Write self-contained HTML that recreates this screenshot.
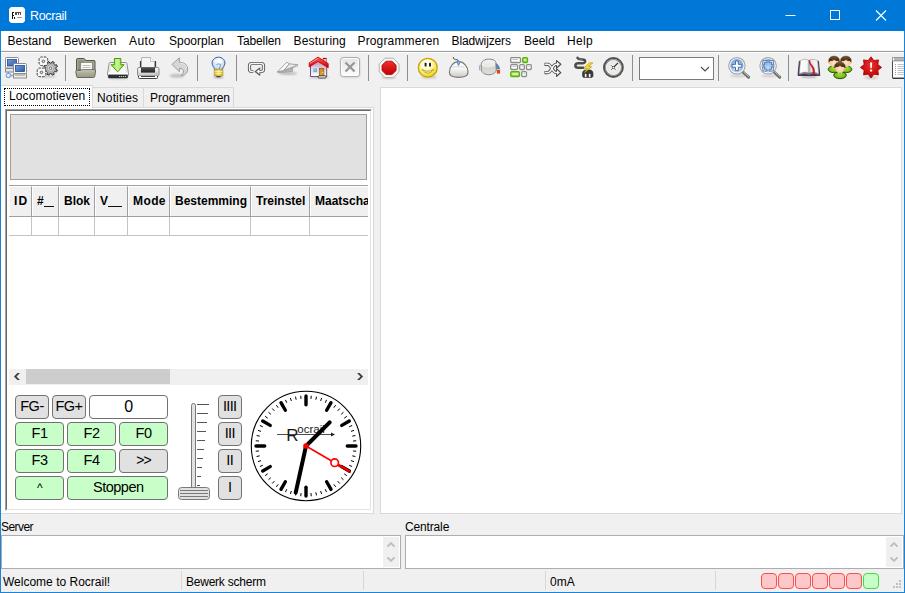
<!DOCTYPE html>
<html><head><meta charset="utf-8"><title>Rocrail</title>
<style>
*{box-sizing:border-box;margin:0;padding:0}
html,body{width:905px;height:593px;overflow:hidden;background:#f0f0f0}
body{font-family:"Liberation Sans",sans-serif;font-size:12px;color:#000;position:relative}
.a{position:absolute}
.t{position:absolute;white-space:nowrap;line-height:14px;height:14px}
#title{left:0;top:0;width:905px;height:31px;background:#0078d7}
#menubar{left:1px;top:31px;width:903px;height:20px;background:#fff}
#menubar .t{top:3px}
#tbline{left:1px;top:51px;width:903px;height:1px;background:#a0a0a0}
#toolbar{left:1px;top:52px;width:903px;height:34px;background:#f0f0f0}
.sep{position:absolute;top:57px;width:1px;height:24px;background:#a0a0a0}
.ic{position:absolute;top:56px;width:24px;height:24px}
.bl{left:0;top:31px;width:1px;height:562px;background:#1883d7}
.br{left:904px;top:31px;width:1px;height:562px;background:#1883d7}
.bb{left:0;top:592px;width:905px;height:1px;background:#1883d7}

.tab{position:absolute;top:87px;height:20px;background:#f0f0f0;border:1px solid #d9d9d9;border-bottom:none}
.btn{position:absolute;height:24px;border:1px solid #727272;border-radius:4px;background:#e1e1e1;text-align:center;font-size:14.5px;letter-spacing:-.5px;line-height:21px}
.g{background:#c8ffc8}
.hc{position:absolute;top:0;height:30px;border-right:1px solid #a0a0a0;border-left:1px solid #fff;border-top:1px solid #fff;font-weight:bold;font-size:12px;line-height:28px;padding-left:4px;white-space:nowrap;overflow:hidden}
.vl{position:absolute;top:217px;width:1px;height:18px;background:#c4c4c4}
.sbx{position:absolute;top:571px;width:1px;height:19px;background:#d7d7d7}
.led{position:absolute;top:573px;width:16px;height:16px;border:1px solid #ff4d4d;border-radius:4px;background:#ffc8c8}
</style></head><body>
<!-- TITLE BAR -->
<div id="title" class="a"></div>
<svg class="a" style="left:9px;top:7px" width="16" height="16" viewBox="0 0 16 16"><path d="M2 0h12l2 2v12l-2 2H2l-2 -2V2z" fill="#fff"/><path d="M3 5h2v1h-1v2h1v1h-1v3h-1zM5 10h1v2h-1z" fill="#111"/><path d="M6 5h6v3h-1v-2h-1v2h-1v-2h-1v2h-2z" fill="#333" opacity=".85"/><path d="M8 10h5v1h-5z" fill="#999"/></svg>
<div class="t" style="left:30px;top:9px;color:#fff;font-size:12.5px;letter-spacing:-0.35px">Rocrail</div>
<svg class="a" style="left:767px;top:0" width="138" height="31" viewBox="0 0 138 31">
<path d="M18.5 15.5h10" stroke="#fff" stroke-width="1" fill="none"/>
<rect x="63.500" y="10.500" width="9" height="9" stroke="#fff" stroke-width="1" fill="none"/>
<path d="M109 10.500l10 10M119 10.500l-10 10" stroke="#fff" stroke-width="1.100" fill="none"/>
</svg>
<!-- MENU -->
<div id="menubar" class="a">
<span class="t" style="left:6.500px">Bestand</span>
<span class="t" style="left:62.500px;letter-spacing:-.08px">Bewerken</span>
<span class="t" style="left:128px;letter-spacing:.45px">Auto</span>
<span class="t" style="left:168px">Spoorplan</span>
<span class="t" style="left:236px;letter-spacing:-.1px">Tabellen</span>
<span class="t" style="left:292.500px;letter-spacing:.2px">Besturing</span>
<span class="t" style="left:356.500px;letter-spacing:.15px">Programmeren</span>
<span class="t" style="left:450.500px;letter-spacing:-.12px">Bladwijzers</span>
<span class="t" style="left:523px">Beeld</span>
<span class="t" style="left:566px;letter-spacing:.35px">Help</span>
</div>
<div id="tbline" class="a"></div>
<div id="toolbar" class="a"></div>
<div class="a" style="left:1px;top:52px;width:903px;height:1px;background:#fff"></div>
<div class="a" style="left:1px;top:50px;width:903px;height:1px;background:#f5f5f5"></div>
<!-- TOOLBAR-ICONS -->
<svg class="a" style="left:0;top:52px" width="905" height="34" viewBox="0 52 905 34">
<defs>
<linearGradient id="scr" x1="0" y1="0" x2="1" y2="1"><stop offset="0" stop-color="#7a9fd6"/><stop offset=".5" stop-color="#4d7cc4"/><stop offset="1" stop-color="#2a56a6"/></linearGradient>
<linearGradient id="fold" x1="0" y1="0" x2="0" y2="1"><stop offset="0" stop-color="#bdbdaa"/><stop offset="1" stop-color="#9a9a86"/></linearGradient>
<linearGradient id="grn" x1="0" y1="0" x2="1" y2="0"><stop offset="0" stop-color="#8fe03a"/><stop offset=".5" stop-color="#c6f59a"/><stop offset="1" stop-color="#7ed321"/></linearGradient>
<linearGradient id="prn" x1="0" y1="0" x2="0" y2="1"><stop offset="0" stop-color="#fafafa"/><stop offset="1" stop-color="#c4c4c4"/></linearGradient>
<linearGradient id="slot" x1="0" y1="0" x2="0" y2="1"><stop offset="0" stop-color="#555"/><stop offset="1" stop-color="#222"/></linearGradient>
<linearGradient id="gold" x1="0" y1="0" x2="1" y2="0"><stop offset="0" stop-color="#c9a200"/><stop offset=".5" stop-color="#f3e38a"/><stop offset="1" stop-color="#c9a200"/></linearGradient>
<radialGradient id="bulb" cx=".5" cy=".35" r=".6"><stop offset="0" stop-color="#ffffff"/><stop offset="1" stop-color="#c3d6ef"/></radialGradient>
<radialGradient id="gear" cx=".5" cy=".5" r=".5"><stop offset="0" stop-color="#e6e6e6"/><stop offset=".6" stop-color="#b8b8b8"/><stop offset="1" stop-color="#8e8e8e"/></radialGradient>
<filter id="b1" x="-20%" y="-50%" width="140%" height="200%"><feGaussianBlur stdDeviation="0.9"/></filter>
</defs>
<!-- separators -->
<g fill="#8e8e8e">
<rect x="65" y="55" width="1" height="26"/><rect x="197" y="55" width="1" height="26"/><rect x="236" y="55" width="1" height="26"/><rect x="368" y="55" width="1" height="26"/><rect x="407" y="55" width="1" height="26"/><rect x="632" y="55" width="1" height="26"/><rect x="718" y="55" width="1" height="26"/><rect x="788" y="55" width="1" height="26"/>
</g>
<!-- combo -->
<rect x="639.500" y="57.500" width="74" height="22" fill="#fff" stroke="#7a7a7a"/>
<path d="M701 67L705 71L709 67" stroke="#505050" stroke-width="1.200" fill="none"/>

<!-- 1 network computers -->
<g>
<circle cx="8.400" cy="75.400" r="2.100" fill="#f4f8fd" stroke="#7fabe0" stroke-width="1.300"/>
<rect x="7.600" y="72" width="1.800" height="1.600" fill="#7fabe0"/><rect x="10.400" y="74.600" width="3.400" height="1.700" fill="#7fabe0"/>
<rect x="5.500" y="68.500" width="8" height="3.500" fill="#e4e4e4" stroke="#8a8a8a"/>
<rect x="5.500" y="57.500" width="13" height="10.500" rx="1" fill="#fff" stroke="#8a8a8a"/>
<rect x="7.500" y="59.500" width="9" height="6.500" fill="url(#scr)" stroke="#1f4a9a" stroke-width=".8"/>
<rect x="13.500" y="63.500" width="13" height="10" rx="1" fill="#fff" stroke="#8a8a8a"/>
<rect x="15.500" y="65.500" width="9" height="6" fill="url(#scr)" stroke="#1f4a9a" stroke-width=".8"/>
<rect x="13.500" y="74" width="13" height="4" fill="#f4f4f4" stroke="#8a8a8a"/>
<path d="M15 75.600H25" stroke="#b5b5b5" stroke-width="1"/>
</g>
<!-- 2 gears -->
<g>
<ellipse cx="48" cy="76.300" rx="8" ry="1.200" fill="#000" opacity=".2" filter="url(#b1)"/>
<g transform="translate(50.600 68.300)">
<path d="M0.78 -5.24L1.63 -6.81L3.66 -5.97L3.16 -4.26L4.26 -3.16L5.97 -3.66L6.81 -1.63L5.24 -0.78L5.24 0.78L6.81 1.63L5.97 3.66L4.26 3.16L3.16 4.26L3.66 5.97L1.63 6.81L0.78 5.24L-0.78 5.24L-1.63 6.81L-3.66 5.97L-3.16 4.26L-4.26 3.16L-5.97 3.66L-6.81 1.63L-5.24 0.78L-5.24 -0.78L-6.81 -1.63L-5.97 -3.66L-4.26 -3.16L-3.16 -4.26L-3.66 -5.97L-1.63 -6.81L-0.78 -5.24z" fill="url(#gear)" stroke="#3c3c3c" stroke-width="1" stroke-linejoin="round"/>
<circle r="3.300" fill="#dcdcdc" stroke="#9a9a9a" stroke-width=".8"/><circle r="1.300" fill="#fff" stroke="#444" stroke-width=".8"/>
</g>
<g transform="translate(43.400 61.300)">
<rect x="-4.300" y="-4.300" width="8.600" height="8.600" rx="2.300" fill="#f6f6f6" stroke="#363636" stroke-width="1" stroke-dasharray="2.500 1.150" stroke-dashoffset="1.200"/>
<circle r="1.250" fill="#e0e0e0" stroke="#444" stroke-width=".8"/>
</g>
<g transform="translate(41.500 72.400)">
<rect x="-4.300" y="-4.300" width="8.600" height="8.600" rx="2.300" fill="#f6f6f6" stroke="#363636" stroke-width="1" stroke-dasharray="2.500 1.150" stroke-dashoffset="1.200"/>
<circle r="1.250" fill="#e0e0e0" stroke="#444" stroke-width=".8"/>
</g>
</g>
<!-- 3 folder -->
<g>
<path d="M76.500 70V59.500q0 -1 1 -1h6q1 0 1.500 1l.5 1h8.500q1 0 1 1V70z" fill="#8f8f7c" stroke="#55554a" stroke-width="1"/><path d="M77.600 70V59.800h5.800l1.200 1.900h9.200V70" fill="none" stroke="#b4b4a2" stroke-width=".8"/>
<rect x="80.800" y="62.600" width="11.400" height="8" fill="#fff" stroke="#77776a" stroke-width=".6"/>
<path d="M82.500 65.400H90.500M82.500 67.400H90.500" stroke="#b9b9b0" stroke-width="1"/>
<path d="M75.800 71.600q-.4 -1 .8 -1h4.300l1 -.9h12.600q1.400 0 1.100 1.100l-.9 5.700q-.2 1 -1.200 1H77.800q-1 0 -1.200 -1z" fill="url(#fold)" stroke="#66665a" stroke-width="1"/><path d="M77 71.600h4.200l1 -.9h12" stroke="#d0d0c0" stroke-width=".7" fill="none"/>
</g>
<!-- 4 download -->
<g>
<ellipse cx="118" cy="78.300" rx="10" ry="1.200" fill="#000" opacity=".15" filter="url(#b1)"/>
<path d="M110.200 62.500h15.600q.8 0 1 .8l1.700 10.200v1.500H107.500v-1.500l1.700 -10.200q.2 -.8 1 -.8z" fill="#f7f7f5" stroke="#8e8e8e" stroke-width="1"/><path d="M108.300 73.500H127.700" stroke="#fff" stroke-width="1.400"/>
<path d="M109 72.500L111 66M127 72.500L125 66" stroke="#dedede" stroke-width="1" fill="none"/>
<rect x="108.300" y="75" width="19.400" height="3" rx=".8" fill="#2e3436" stroke="#1c2022" stroke-width=".5"/>
<path d="M119 76.500H126" stroke="#c8c8c8" stroke-width="1" stroke-dasharray="1.200 .8"/>
<path d="M114.400 58.500h6.400v6.200h3.400L117.600 71.800 111 64.700h3.400z" fill="url(#grn)" stroke="#4e9a06" stroke-width="1" stroke-linejoin="round"/>
</g>
<!-- 5 printer -->
<g>
<path d="M141.500 57.500h9l4 4v6.500h-13z" fill="#f4f4f4" stroke="#b4b4b4" stroke-width="1"/>
<path d="M150.500 57.500v4h4" fill="#fff" stroke="#b4b4b4" stroke-width=".8"/>
<path d="M140.500 61V67M155.500 61V67" stroke="#3a3a3a" stroke-width="1.200"/>
<rect x="137.500" y="67.500" width="21.500" height="8.500" rx="1.500" fill="url(#prn)" stroke="#8a8a8a"/>
<rect x="141" y="67.300" width="14" height="5.300" fill="url(#slot)"/>
<rect x="155.800" y="72.800" width="1.300" height="1.300" fill="#6fe03a"/>
<path d="M138.500 76v1.500q0 1 1 1h17q1 0 1 -1V76" fill="#fff" stroke="#3e3e3e" stroke-width="1"/>
<path d="M141 76.500H155" stroke="#3e3e3e" stroke-width="1"/>
</g>
<!-- 6 undo (disabled) -->
<g>
<ellipse cx="177" cy="75.800" rx="7.500" ry="1.800" fill="#000" opacity=".22" filter="url(#b1)"/>
<path d="M179.400 57.800v4.400q8.300 .6 8.300 7.200 0 4.400 -5.600 6.400 -.8 .2 -.8 -.7 2.600 -1.800 2.300 -4.200 -.4 -2.400 -4.200 -2.700v3.600L172 64.400z" fill="#d6d6d6" stroke="#9c9c9c" stroke-width="1" stroke-linejoin="round"/>
<path d="M180.500 63.200q5.500 .6 6.200 5" stroke="#ececec" stroke-width="1" fill="none"/>
</g>
<!-- 7 bulb -->
<g>
<ellipse cx="218.500" cy="77" rx="5" ry="1.200" fill="#000" opacity=".3" filter="url(#b1)"/>
<path d="M218.500 57.200c3.800 0 6.400 2.700 6.400 5.800 0 2.800 -2.200 4.300 -2.500 6.500h-7.800c-.3 -2.200 -2.500 -3.700 -2.500 -6.500 0 -3.100 2.600 -5.800 6.400 -5.800z" fill="url(#bulb)" stroke="#3465a4" stroke-width="1"/>
<ellipse cx="218.500" cy="61" rx="3.600" ry="1.800" fill="#fff"/>
<path d="M216.300 64.500q2.200 -1.200 4.400 0l-1.600 4.500" stroke="#6f94c8" stroke-width=".9" fill="none"/>
<rect x="214.200" y="69.200" width="8.800" height="6.800" rx="1.200" fill="url(#gold)" stroke="#b89600" stroke-width=".6"/>
<path d="M214.500 71.300H222.700M214.500 73.300H222.700" stroke="#fff6c0" stroke-width=".9" opacity=".9"/>
<rect x="216.500" y="76" width="4" height="1.200" fill="#3a3a3a"/>
</g>
<defs>
<linearGradient id="roof" x1="0" y1="0" x2="0" y2="1"><stop offset="0" stop-color="#ff5a5a"/><stop offset=".5" stop-color="#ef2929"/><stop offset="1" stop-color="#c00000"/></linearGradient>
<linearGradient id="wall" x1="0" y1="0" x2="0" y2="1"><stop offset="0" stop-color="#b58fc0"/><stop offset=".55" stop-color="#e6d6ea"/><stop offset="1" stop-color="#ffffff"/></linearGradient>
<linearGradient id="door" x1="0" y1="0" x2="0" y2="1"><stop offset="0" stop-color="#c98a1c"/><stop offset="1" stop-color="#e0a04a"/></linearGradient>
<linearGradient id="xbtn" x1="0" y1="0" x2="0" y2="1"><stop offset="0" stop-color="#e2e2e2"/><stop offset="1" stop-color="#ffffff"/></linearGradient>
<linearGradient id="stop" x1="0" y1="0" x2="0" y2="1"><stop offset="0" stop-color="#f03030"/><stop offset="1" stop-color="#c00000"/></linearGradient>
<radialGradient id="smile" cx=".42" cy=".32" r=".72"><stop offset="0" stop-color="#ffffff"/><stop offset=".35" stop-color="#fffbd2"/><stop offset=".72" stop-color="#f6e65c"/><stop offset="1" stop-color="#e4c600"/></radialGradient>
<linearGradient id="mouse" x1="0" y1="0" x2="0" y2="1"><stop offset="0" stop-color="#f4f4f2"/><stop offset=".35" stop-color="#ffffff"/><stop offset="1" stop-color="#c9cbc6"/></linearGradient>
<linearGradient id="knob" x1="0" y1="0" x2="0" y2="1"><stop offset="0" stop-color="#f2f2f0"/><stop offset=".45" stop-color="#e8e9e6"/><stop offset=".5" stop-color="#d0d4cc"/><stop offset="1" stop-color="#dfe2dc"/></linearGradient>
<radialGradient id="face" cx=".5" cy=".5" r=".5"><stop offset="0" stop-color="#f6f6f4"/><stop offset="1" stop-color="#dfe0dc"/></radialGradient>
</defs>
<!-- 8 loop -->
<g fill="none" stroke-linejoin="round">
<path d="M253.300 71.500H251.700q-2.200 0 -2.200 -2.200V65.700q0 -2.200 2.200 -2.200H261.300q2.200 0 2.200 2.200V69.300q0 2.200 -2.200 2.200H258.500" stroke="#555" stroke-width="3.200" stroke-linecap="butt"/>
<path d="M259.700 68.100v7L255.200 71.600z" fill="#555" stroke="#555" stroke-width="1.200"/>
<path d="M253.300 71.500H251.700q-2.200 0 -2.200 -2.200V65.700q0 -2.200 2.200 -2.200H261.300q2.200 0 2.200 2.200V69.300q0 2.200 -2.200 2.200H258.500" stroke="#f6f6f6" stroke-width="1.400"/>
<path d="M259.400 69.100v5L256.300 71.600z" fill="#f8f8f8" stroke="none"/>
</g>
<!-- 9 paper plane -->
<g>
<ellipse cx="288" cy="73.300" rx="9.500" ry="1.200" fill="#000" opacity=".28" filter="url(#b1)"/>
<path d="M289 63.800L297.800 64.700 297.300 66 284 70.800z" fill="#ecedea" stroke="#8e8f8a" stroke-width=".8" stroke-linejoin="round"/>
<path d="M277.400 72L292.600 68v3.300L280 72.700z" fill="#b4b7af" stroke="#8e8f8a" stroke-width=".6" stroke-linejoin="round"/>
<path d="M277.400 72L286.700 62.300 289.400 63.700 283.600 70.400z" fill="#fcfcfc" stroke="#8e8f8a" stroke-width=".8" stroke-linejoin="round"/>
<path d="M283.600 70.400L296 65.400" stroke="#a8aaa4" stroke-width=".7"/>
</g>
<!-- 10 house -->
<g>
<ellipse cx="319" cy="77.300" rx="10" ry="1" fill="#000" opacity=".25" filter="url(#b1)"/>
<rect x="323.200" y="58.600" width="3" height="5" fill="#e4e4e4" stroke="#666" stroke-width=".7"/>
<rect x="322.900" y="57.900" width="3.600" height="1.200" fill="#c00"/>
<path d="M310.500 65.500L318 60.500l8.700 5V76.500H310.500z" fill="url(#wall)" stroke="#75507b" stroke-width="1"/>
<rect x="313" y="68" width="4.600" height="4.400" fill="#729fcf" stroke="#dfe9f5" stroke-width=".9"/>
<rect x="314.300" y="69.200" width="2" height="1.600" fill="#a9c5e6"/>
<rect x="319.300" y="68.300" width="4.600" height="7.700" fill="url(#door)" stroke="#8f5902" stroke-width=".7"/>
<rect x="322.200" y="72" width="1" height="1" fill="#fce94f"/>
<rect x="318.200" y="75.800" width="7.800" height="2.200" rx=".7" fill="#fff" stroke="#2a2a2a" stroke-width=".9"/>
<path d="M309.200 62.900L318 57.100l10.200 6.400v4.200L318 61.500 309.200 67z" fill="url(#roof)" stroke="#c00000" stroke-width=".8" stroke-linejoin="round"/>
<path d="M310 63.500L318 58.300" stroke="#ffb0b0" stroke-width=".8" fill="none"/>
</g>
<!-- 11 X disabled -->
<g>
<rect x="340.800" y="58" width="19" height="19.300" rx="2.800" fill="#000" opacity=".2" filter="url(#b1)"/>
<rect x="340.700" y="57.600" width="18.800" height="18.800" rx="2.600" fill="url(#xbtn)" stroke="#a8a8a8" stroke-width="1"/>
<rect x="341.700" y="58.600" width="16.800" height="16.800" rx="1.800" fill="none" stroke="#fff" stroke-width="1"/>
<path d="M345.500 62.500L354.600 71.500M354.600 62.500L345.500 71.500" stroke="#969892" stroke-width="2.300" fill="none"/>
</g>
<!-- 12 stop -->
<g>
<ellipse cx="389" cy="77.300" rx="7" ry="1" fill="#000" opacity=".3" filter="url(#b1)"/>
<path d="M384.900 58.200h8.300l5.800 5.700v8l-5.800 5.600h-8.300l-5.700 -5.600v-8z" fill="#f8f8f6" stroke="#b2b4ae" stroke-width="1"/>
<path d="M386.100 61.200h5.900l4.100 4v5.400l-4.100 4h-5.900l-4.100 -4v-5.400z" fill="url(#stop)" stroke="#b00000" stroke-width=".8"/>
</g>
<!-- 13 smiley -->
<g>
<ellipse cx="429" cy="77" rx="8" ry="1.300" fill="#000" opacity=".2" filter="url(#b1)"/>
<circle cx="427.800" cy="67.700" r="9.400" fill="url(#smile)" stroke="#c8a400" stroke-width="1.300"/>
<rect x="424.600" y="62.800" width="2" height="3.800" rx=".7" fill="#222"/><rect x="429" y="62.800" width="2" height="3.800" rx=".7" fill="#222"/>
<path d="M421.800 69.200q6.100 8 12.200 0q-6.100 4.200 -12.200 0z" fill="#fffad8" stroke="#b09200" stroke-width=".8" stroke-linejoin="round"/>
</g>
<!-- 14 mouse -->
<g>
<path d="M453.200 57q0 2.400 2.200 2.400 3 -.2 3.100 2.200" stroke="#444" stroke-width=".9" fill="none"/>
<path d="M449.400 72.500c0 -6 4 -10.800 9.200 -10.800s9.400 4.800 9.400 10.800c0 3 -4 4.800 -9.400 4.800s-9.200 -1.800 -9.200 -4.800z" fill="url(#mouse)" stroke="#7c7c7a" stroke-width="1.200"/>
<path d="M452.500 67.300q3 -1.200 6 -.2 3 -1 6 .2" stroke="#c4c6c0" stroke-width=".8" fill="none"/>
<path d="M458.500 60.800l1.200 2.200 -1.200 2.700 -1.200 -2.700z" fill="#9cc4ee" stroke="#4a8ad6" stroke-width=".9"/>
</g>
<!-- 15 knob -->
<g>
<path d="M494.500 62.300q4.600 2.300 5.300 6.800h-3.400q-.4 -2.800 -3 -4.300z" fill="#5f86b4" stroke="#4a6f9c" stroke-width=".5"/>
<path d="M480.200 64.800q-1.200 2.800 -.3 5.600" stroke="#7aa0d4" stroke-width="1" fill="none"/>
<rect x="496.900" y="70" width="3.200" height="3.600" fill="#e8401c"/>
<path d="M481.300 64.500c0 -3.400 3.600 -5.400 7.400 -5.400 3.400 0 6.500 1 7 2.600l.6 8.500c-.5 2.700 -3.800 4.500 -7.600 4.500 -4 0 -7.400 -2.200 -7.400 -5.600z" fill="url(#knob)" stroke="#848484" stroke-width="1"/>
<path d="M481.800 64.800q3.500 2.800 7.300 2.300 4 -.4 6.500 -4.800" stroke="#f8f8f6" stroke-width=".8" fill="none" opacity=".8"/>
</g>
<!-- 16 keys -->
<g stroke-width="1.300">
<rect x="510.700" y="57.700" width="9.800" height="4.800" rx="1" fill="#fff" stroke="#8c8c88"/>
<rect x="522.700" y="57.700" width="4.800" height="4.800" rx="1" fill="#9be24a" stroke="#5db012"/>
<rect x="510.700" y="64.700" width="6.800" height="4.800" rx="1" fill="#fff" stroke="#8c8c88"/>
<rect x="519.700" y="64.700" width="4.600" height="4.800" rx="1" fill="#fff" stroke="#8c8c88"/>
<rect x="526.500" y="64.700" width="4.800" height="4.800" rx="1" fill="#fff" stroke="#8c8c88"/>
<rect x="510.700" y="71.700" width="8.800" height="4.800" rx="1" fill="#9be24a" stroke="#5db012"/>
<rect x="521.700" y="71.700" width="4.800" height="4.800" rx="1" fill="#fff" stroke="#8c8c88"/>
<path d="M512.300 59.500H518M512.300 66.500H516M521.300 66.500H522.800M528.200 66.500H529.700M523.300 73.500H524.800" stroke="#c6c6c2" stroke-width="1"/>
<path d="M524 59.800H526.300M512.300 74H518" stroke="#e6f8d0" stroke-width="1.300"/>
</g>
<!-- 17 shuffle -->
<g fill="none" stroke-linejoin="round">
<g stroke="#4e4e4e" stroke-width="3.200">
<path d="M544.500 64.300h3.200c4 0 4.300 8.300 8.600 8.300h1.200"/>
<path d="M544.500 72.600h3.200c4 0 4.300 -8.300 8.600 -8.300h1.200"/>
</g>
<path d="M556.600 60.600L560.800 64.300 556.600 68z" fill="#4e4e4e" stroke="#4e4e4e" stroke-width="1.200"/>
<path d="M556.600 68.900L560.800 72.600 556.600 76.300z" fill="#4e4e4e" stroke="#4e4e4e" stroke-width="1.200"/>
<g stroke="#f8f8f8" stroke-width="1.500">
<path d="M545.100 64.300h2.600c4 0 4.300 8.300 8.600 8.300h1.500"/>
<path d="M545.100 72.600h2.600c4 0 4.300 -8.300 8.600 -8.300h1.500"/>
</g>
<path d="M557 61.800L559.900 64.300 557 66.800z" fill="#f8f8f8" stroke="none"/>
<path d="M557 70.100L559.900 72.600 557 75.100z" fill="#f8f8f8" stroke="none"/>
</g>
<!-- 18 plug + lightning -->
<g>
<path d="M577.500 57.800c1 1.600 3 1.600 5 1.600 3.500 0 3.600 3.800 0 3.800h-4.300c-3.800 0 -3.800 4.600 0 4.600h5" stroke="#4c4c4c" stroke-width="2.500" fill="none" stroke-linecap="round"/>
<path d="M578.500 58.700c1 .7 2.500 .7 4 .7" stroke="#888" stroke-width=".7" fill="none"/>
<path d="M582.500 73.500c0 -2.200 1.400 -3.500 3 -3.500h4.500c1.600 0 3 1.300 3 3.500v2.200c0 1.200 -.8 1.800 -1.800 1.800h-6.900c-1 0 -1.800 -.6 -1.800 -1.800z" fill="#3a3a3a" stroke="#2a2a2a" stroke-width=".6"/>
<rect x="584.800" y="73.700" width="1.700" height="3.600" rx=".7" fill="#f2f2f2"/><rect x="588.800" y="73.700" width="1.700" height="3.600" rx=".7" fill="#f2f2f2"/>
<path d="M589.500 62.800l-5.600 5.200 3.600 .4 -2.800 4 7 -5.600 -3.600 -.4 4.800 -3.400z" fill="#f4e04a" stroke="#c4a000" stroke-width=".8" stroke-linejoin="round"/>
</g>
<!-- 19 clock -->
<g>
<circle cx="613.400" cy="67.500" r="9.400" fill="url(#face)" stroke="#525252" stroke-width="2"/>
<circle cx="613.400" cy="67.500" r="7.900" fill="none" stroke="#8a8a88" stroke-width="1.100"/>
<circle cx="613.400" cy="67.500" r="7" fill="none" stroke="#fff" stroke-width=".7"/>
<path d="M613.400 67.500L618 62.800" stroke="#2e2e2e" stroke-width="1.100"/>
<path d="M611 65.200L615.800 70M611 70L613.400 67.500" stroke="#555" stroke-width=".8"/>
<rect x="612.500" y="66.600" width="1.800" height="1.800" fill="#fff" stroke="#333" stroke-width=".5"/>
</g>
<defs>
<radialGradient id="lens" cx=".5" cy=".75" r=".8"><stop offset="0" stop-color="#cfe0f4"/><stop offset=".5" stop-color="#9dbde6"/><stop offset="1" stop-color="#7aa3d8"/></radialGradient>
<linearGradient id="page" x1="0" y1="0" x2="1" y2="0"><stop offset="0" stop-color="#ffffff"/><stop offset=".8" stop-color="#f4f4f4"/><stop offset="1" stop-color="#c8c8c8"/></linearGradient>
<linearGradient id="page2" x1="0" y1="0" x2="1" y2="0"><stop offset="0" stop-color="#b0b0b0"/><stop offset=".25" stop-color="#e6e6e6"/><stop offset="1" stop-color="#fafafa"/></linearGradient>
<radialGradient id="skin" cx=".5" cy=".6" r=".6"><stop offset="0" stop-color="#ffe9cf"/><stop offset="1" stop-color="#f3b877"/></radialGradient>
<linearGradient id="shirt" x1="0" y1="0" x2="0" y2="1"><stop offset="0" stop-color="#8ccc2e"/><stop offset="1" stop-color="#58980c"/></linearGradient>
<radialGradient id="star" cx=".5" cy=".4" r=".6"><stop offset="0" stop-color="#ee3030"/><stop offset="1" stop-color="#b40000"/></radialGradient>
<radialGradient id="shirt2" cx=".5" cy=".45" r=".6"><stop offset="0" stop-color="#9cdc2c"/><stop offset=".6" stop-color="#7cc01c"/><stop offset="1" stop-color="#3f7a0a"/></radialGradient>
<linearGradient id="hair" x1="0" y1="0" x2="0" y2="1"><stop offset="0" stop-color="#7a5a34"/><stop offset=".45" stop-color="#5a3c1e"/><stop offset="1" stop-color="#3a2410"/></linearGradient>
<g id="pbody">
<ellipse cx="0" cy="0" rx="6.300" ry="3.400" fill="url(#shirt2)" stroke="#234a06" stroke-width=".9"/>
<path d="M-2.600 -2.900L-1.300 -1.600 -1 -3zM2.600 -2.900L1.300 -1.600 1 -3z" fill="#f0f6e8"/>
</g>
<g id="phead">
<ellipse cx="-4.900" cy=".6" rx=".9" ry="1.400" fill="#f0b070"/><ellipse cx="4.900" cy=".6" rx=".9" ry="1.400" fill="#f0b070"/>
<ellipse cx="0" cy=".2" rx="4.900" ry="5" fill="url(#skin)"/>
<path d="M-5.100 .2c-.8 -3.600 1.700 -5.700 5.100 -5.700s5.900 2.100 5.100 5.700c-.9 -1.700 -2.600 -2.100 -5.100 -2.100s-4.200 .4 -5.100 2.100z" fill="url(#hair)" stroke="#2e1c0a" stroke-width=".5"/>
<path d="M-3.600 -1.300h2.300M1.300 -1.300h2.300" stroke="#241010" stroke-width="1" opacity=".85"/>
</g>
<g id="glass">
<ellipse cx="1" cy="10" rx="8" ry="1.500" fill="#000" opacity=".15" filter="url(#b1)"/>
<path d="M6 6.200L11.600 11.400" stroke="#666" stroke-width="3" stroke-linecap="round"/>
<path d="M7 6.200L11.600 10.500" stroke="#b4b4b4" stroke-width="1.100" stroke-linecap="round"/>
<circle r="8.200" fill="#fff" stroke="#a2a4a0" stroke-width="1.100"/>
<circle r="6.700" fill="url(#lens)"/>
</g>
</defs>
<!-- 20 zoom in -->
<g transform="translate(736.900 65.800)">
<use href="#glass"/>
<path d="M-1.400 -4.800h2.800v3.400h3.400v2.800h-3.400v3.400h-2.800v-3.400h-3.400v-2.800h3.400z" fill="#fff" stroke="#3465a4" stroke-width=".9"/>
</g>
<!-- 21 zoom fit -->
<g transform="translate(768.100 65.800)">
<use href="#glass"/>
<g fill="#f4f8fd" stroke="#3465a4" stroke-width=".8" stroke-linejoin="miter">
<path d="M-5.200 -5.200h4.200v1.700h-2.500v2.500h-1.700z"/>
<path d="M5.200 -5.200h-4.200v1.700h2.500v2.500h1.700z"/>
<path d="M-5.200 5.200h4.200v-1.700h-2.500v-2.500h-1.700z"/>
<path d="M5.200 5.200h-4.200v-1.700h2.500v-2.500h1.700z"/>
</g>
</g>
<!-- 22 book -->
<g>
<ellipse cx="809" cy="76.600" rx="8" ry="1.100" fill="#000" opacity=".3" filter="url(#b1)"/>
<path d="M799.300 61.200l-1.300 14.300h21.800l-1.300 -14.300z" fill="#4a3558" stroke="#32213e" stroke-width=".8"/>
<path d="M800.400 61c2.600 -2.200 6.400 -2.200 8.600 -.4v12.400c-2.200 -1.200 -6.600 -1.200 -9.600 .8z" fill="url(#page)" stroke="#a4a4a4" stroke-width=".7"/>
<path d="M817.600 61c-2.600 -2.200 -6.400 -2.200 -8.600 -.4v12.400c2.200 -1.200 6.600 -1.200 9.600 .8z" fill="url(#page2)" stroke="#a4a4a4" stroke-width=".7"/>
<path d="M799.600 74.400c3 -1.500 7 -1.500 9.400 -.1 2.400 -1.400 6.400 -1.400 9.400 .1" stroke="#8c8c8c" stroke-width="1" fill="none"/>
<path d="M808.800 60.400h1c.3 4 4.600 5.600 4.800 9.800l.1 3.800h-1.700l-.1 -3.600c-.3 -4 -4 -5.400 -4.100 -10z" fill="#cc1c24" stroke="#a01018" stroke-width=".3"/>
</g>
<!-- 23 people -->
<use href="#pbody" transform="translate(833.700 69.300) scale(.88 1)"/>
<use href="#pbody" transform="translate(846.300 69.300) scale(.88 1)"/>
<use href="#phead" transform="translate(834.100 61.700)"/>
<use href="#phead" transform="translate(845.900 61.700)"/>
<use href="#pbody" transform="translate(840 75.300)"/>
<use href="#phead" transform="translate(839.900 67.700)"/>
<!-- 24 star -->
<g>
<ellipse cx="871" cy="77.600" rx="7" ry="1" fill="#000" opacity=".25" filter="url(#b1)"/>
<path d="M871.00 56.80L873.83 60.56L878.50 59.90L877.84 64.57L881.60 67.40L877.84 70.23L878.50 74.90L873.83 74.24L871.00 78.00L868.17 74.24L863.50 74.90L864.16 70.23L860.40 67.40L864.16 64.57L863.50 59.90L868.17 60.56z" fill="url(#star)" stroke="#a40000" stroke-width=".8" stroke-linejoin="round"/>
<path d="M870 62.500h2.200l-.4 5.800h-1.400z" fill="#fff"/><rect x="870" y="69.500" width="2.200" height="2.100" rx=".5" fill="#fff"/>
</g>
<!-- 25 notepad (cut) -->
<g>
<rect x="892.500" y="59.500" width="14" height="18.500" fill="#fff" stroke="#4a4a4a" stroke-width="1"/>
<rect x="892.500" y="57.500" width="14" height="3.500" fill="#f6f6f6" stroke="#8a8a8a" stroke-width=".7"/>
<path d="M895 57.500v3.500M897 57.500v3.500M899 57.500v3.500M901 57.500v3.500M903 57.500v3.500" stroke="#555" stroke-width=".8"/>
<path d="M897.500 64.500H904M897.500 66.500H904M897.500 68.500H904M897.500 70.500H904M897.500 72.500H904M897.500 74.500H904" stroke="#c2c2c2" stroke-width="1"/>
<path d="M895 64.500h1M895 66.500h1M895 68.500h1M895 70.500h1M895 72.500h1M895 74.500h1" stroke="#9a9a9a" stroke-width="1"/>
<path d="M893 78.500H904" stroke="#3a3a3a" stroke-width="1"/>
</g>


</svg>

<!-- LEFT-PANEL -->
<!-- notebook page -->
<div class="a" style="left:1px;top:107px;width:373px;height:407px;background:#fff;border:1px solid #d9d9d9;border-left:none"></div>
<!-- tabs -->
<div class="tab" style="left:91px;width:53px"></div>
<div class="tab" style="left:143px;width:91px"></div>
<div class="a" style="left:1px;top:85px;width:92px;height:23px;background:#fff;border:1px solid #d9d9d9;border-bottom:none;border-left:none"></div>
<div class="a" style="left:4px;top:88px;width:86px;height:18px;border:1px dotted #000"></div>
<div class="t" style="left:9px;top:89px;letter-spacing:.13px">Locomotieven</div>
<div class="t" style="left:97px;top:91px;letter-spacing:.15px">Notities</div>
<div class="t" style="left:150px;top:91px">Programmeren</div>
<!-- sunken panel -->
<div class="a" style="left:5px;top:109px;width:367px;height:402px;border-left:1px solid #a0a0a0;border-top:1px solid #a0a0a0;border-right:1px solid #fff;border-bottom:1px solid #fff"></div>
<div class="a" style="left:6px;top:110px;width:365px;height:400px;border-left:1px solid #696969;border-top:1px solid #696969;border-right:1px solid #e3e3e3;border-bottom:1px solid #e3e3e3"></div>
<!-- gray box -->
<div class="a" style="left:10px;top:114px;width:357px;height:66px;background:#e1e1e1;border:1px solid #a0a0a0"></div>
<!-- table -->
<div class="a" style="left:9px;top:185px;width:359px;height:1px;background:#a0a0a0"></div>
<div class="a" style="left:9px;top:186px;width:359px;height:31px;background:#f0f0f0;border-bottom:1px solid #a0a0a0;overflow:hidden">
<div class="hc" style="left:0;width:23px;letter-spacing:1.2px">ID</div>
<div class="hc" style="left:23px;width:27px">#<span style="display:inline-block;width:10px;height:1px;background:#111;vertical-align:-2px;margin-left:.5px"></span></div>
<div class="hc" style="left:50px;width:36px">Blok</div>
<div class="hc" style="left:86px;width:33px">V<span style="display:inline-block;width:14.500px;height:1px;background:#111;vertical-align:-2px;margin-left:-.5px"></span></div>
<div class="hc" style="left:119px;width:42px;letter-spacing:.4px">Mode</div>
<div class="hc" style="left:161px;width:81px">Bestemming</div>
<div class="hc" style="left:242px;width:59px">Treinstel</div>
<div class="hc" style="left:301px;width:80px">Maatschappij</div>
</div>
<div class="vl" style="left:31px"></div><div class="vl" style="left:58px"></div><div class="vl" style="left:94px"></div><div class="vl" style="left:127px"></div><div class="vl" style="left:169px"></div><div class="vl" style="left:250px"></div><div class="vl" style="left:309px"></div>
<div class="a" style="left:9px;top:235px;width:359px;height:1px;background:#c4c4c4"></div>
<!-- hscroll -->
<div class="a" style="left:9px;top:369px;width:359px;height:16px;background:#f0f0f0"></div>
<div class="a" style="left:26px;top:369px;width:144px;height:15px;background:#cdcdcd"></div>
<svg class="a" style="left:9px;top:369px" width="359" height="16" viewBox="0 0 359 16"><path d="M11 4H8.400L4.900 7.500L8.400 11H11L7.500 7.500z" fill="#404040"/><path d="M348 4H350.600L354.100 7.500L350.600 11H348L351.500 7.500z" fill="#404040"/></svg>
<!-- buttons -->
<div class="btn" style="left:15px;top:395px;width:34px">FG-</div>
<div class="btn" style="left:52px;top:395px;width:34px">FG+</div>
<div class="btn" style="left:89px;top:395px;width:79px;background:#fff;font-size:16px">0</div>
<div class="btn g" style="left:15px;top:422px;width:49px">F1</div>
<div class="btn g" style="left:67px;top:422px;width:49px">F2</div>
<div class="btn g" style="left:119px;top:422px;width:49px">F0</div>
<div class="btn g" style="left:15px;top:449px;width:49px">F3</div>
<div class="btn g" style="left:67px;top:449px;width:49px">F4</div>
<div class="btn" style="left:119px;top:449px;width:49px;letter-spacing:-1px;font-size:14px">&gt;&gt;</div>
<div class="btn g" style="left:15px;top:476px;width:49px;font-size:12px;line-height:23px">^</div>
<div class="btn g" style="left:67px;top:476px;width:101px;padding-left:1.500px">Stoppen</div>
<div class="btn" style="left:218px;top:395px;width:24px;letter-spacing:-.65px;padding-right:.5px">IIII</div>
<div class="btn" style="left:218px;top:422px;width:24px;letter-spacing:-.65px;padding-right:.5px">III</div>
<div class="btn" style="left:218px;top:449px;width:24px;letter-spacing:-.65px;padding-right:.5px">II</div>
<div class="btn" style="left:218px;top:476px;width:24px;letter-spacing:-.65px;padding-right:.5px">I</div>
<svg class="a" style="left:176px;top:398px" width="38" height="106" viewBox="176 398 38 106"><rect x="191.500" y="403.500" width="4" height="86" rx="2" fill="#e1e1e1" stroke="#7a7a7a"/><path d="M197 404.5H209" stroke="#555" stroke-width="1"/><path d="M197 413.5H208" stroke="#555" stroke-width="1"/><path d="M197 422.5H207" stroke="#555" stroke-width="1"/><path d="M197 431.5H206" stroke="#555" stroke-width="1"/><path d="M197 440.5H205" stroke="#555" stroke-width="1"/><path d="M197 449.5H204" stroke="#555" stroke-width="1"/><path d="M197 458.5H203" stroke="#555" stroke-width="1"/><path d="M197 467.5H202" stroke="#555" stroke-width="1"/><path d="M197 476.5H201" stroke="#555" stroke-width="1"/><path d="M197 485.5H200" stroke="#555" stroke-width="1"/><rect x="178.500" y="487.500" width="31" height="12" rx="3" fill="#e1e1e1" stroke="#7a7a7a"/><path d="M180 490.5H208" stroke="#7a7a7a" stroke-width="1"/><path d="M180 493.5H208" stroke="#7a7a7a" stroke-width="1"/><path d="M180 496.5H208" stroke="#7a7a7a" stroke-width="1"/></svg><svg class="a" style="left:248px;top:388px" width="116" height="116" viewBox="248 388 116 116"><circle cx="306" cy="446" r="54.700" fill="#fff" stroke="#000" stroke-width="1.100"/><path d="M310.94 398.96L311.28 395.78" stroke="#000" stroke-width="1" stroke-linecap="butt"/><path d="M315.83 399.73L316.50 396.60" stroke="#000" stroke-width="1" stroke-linecap="butt"/><path d="M320.62 401.02L321.61 397.97" stroke="#000" stroke-width="1" stroke-linecap="butt"/><path d="M325.24 402.79L326.54 399.87" stroke="#000" stroke-width="1" stroke-linecap="butt"/><path d="M333.80 407.73L335.68 405.14" stroke="#000" stroke-width="1" stroke-linecap="butt"/><path d="M337.65 410.85L339.79 408.47" stroke="#000" stroke-width="1" stroke-linecap="butt"/><path d="M341.15 414.35L343.53 412.21" stroke="#000" stroke-width="1" stroke-linecap="butt"/><path d="M344.27 418.20L346.86 416.32" stroke="#000" stroke-width="1" stroke-linecap="butt"/><path d="M349.21 426.76L352.13 425.46" stroke="#000" stroke-width="1" stroke-linecap="butt"/><path d="M350.98 431.38L354.03 430.39" stroke="#000" stroke-width="1" stroke-linecap="butt"/><path d="M352.27 436.17L355.40 435.50" stroke="#000" stroke-width="1" stroke-linecap="butt"/><path d="M353.04 441.06L356.22 440.72" stroke="#000" stroke-width="1" stroke-linecap="butt"/><path d="M353.04 450.94L356.22 451.28" stroke="#000" stroke-width="1" stroke-linecap="butt"/><path d="M352.27 455.83L355.40 456.50" stroke="#000" stroke-width="1" stroke-linecap="butt"/><path d="M350.98 460.62L354.03 461.61" stroke="#000" stroke-width="1" stroke-linecap="butt"/><path d="M349.21 465.24L352.13 466.54" stroke="#000" stroke-width="1" stroke-linecap="butt"/><path d="M344.27 473.80L346.86 475.68" stroke="#000" stroke-width="1" stroke-linecap="butt"/><path d="M341.15 477.65L343.53 479.79" stroke="#000" stroke-width="1" stroke-linecap="butt"/><path d="M337.65 481.15L339.79 483.53" stroke="#000" stroke-width="1" stroke-linecap="butt"/><path d="M333.80 484.27L335.68 486.86" stroke="#000" stroke-width="1" stroke-linecap="butt"/><path d="M325.24 489.21L326.54 492.13" stroke="#000" stroke-width="1" stroke-linecap="butt"/><path d="M320.62 490.98L321.61 494.03" stroke="#000" stroke-width="1" stroke-linecap="butt"/><path d="M315.83 492.27L316.50 495.40" stroke="#000" stroke-width="1" stroke-linecap="butt"/><path d="M310.94 493.04L311.28 496.22" stroke="#000" stroke-width="1" stroke-linecap="butt"/><path d="M301.06 493.04L300.72 496.22" stroke="#000" stroke-width="1" stroke-linecap="butt"/><path d="M296.17 492.27L295.50 495.40" stroke="#000" stroke-width="1" stroke-linecap="butt"/><path d="M291.38 490.98L290.39 494.03" stroke="#000" stroke-width="1" stroke-linecap="butt"/><path d="M286.76 489.21L285.46 492.13" stroke="#000" stroke-width="1" stroke-linecap="butt"/><path d="M278.20 484.27L276.32 486.86" stroke="#000" stroke-width="1" stroke-linecap="butt"/><path d="M274.35 481.15L272.21 483.53" stroke="#000" stroke-width="1" stroke-linecap="butt"/><path d="M270.85 477.65L268.47 479.79" stroke="#000" stroke-width="1" stroke-linecap="butt"/><path d="M267.73 473.80L265.14 475.68" stroke="#000" stroke-width="1" stroke-linecap="butt"/><path d="M262.79 465.24L259.87 466.54" stroke="#000" stroke-width="1" stroke-linecap="butt"/><path d="M261.02 460.62L257.97 461.61" stroke="#000" stroke-width="1" stroke-linecap="butt"/><path d="M259.73 455.83L256.60 456.50" stroke="#000" stroke-width="1" stroke-linecap="butt"/><path d="M258.96 450.94L255.78 451.28" stroke="#000" stroke-width="1" stroke-linecap="butt"/><path d="M258.96 441.06L255.78 440.72" stroke="#000" stroke-width="1" stroke-linecap="butt"/><path d="M259.73 436.17L256.60 435.50" stroke="#000" stroke-width="1" stroke-linecap="butt"/><path d="M261.02 431.38L257.97 430.39" stroke="#000" stroke-width="1" stroke-linecap="butt"/><path d="M262.79 426.76L259.87 425.46" stroke="#000" stroke-width="1" stroke-linecap="butt"/><path d="M267.73 418.20L265.14 416.32" stroke="#000" stroke-width="1" stroke-linecap="butt"/><path d="M270.85 414.35L268.47 412.21" stroke="#000" stroke-width="1" stroke-linecap="butt"/><path d="M274.35 410.85L272.21 408.47" stroke="#000" stroke-width="1" stroke-linecap="butt"/><path d="M278.20 407.73L276.32 405.14" stroke="#000" stroke-width="1" stroke-linecap="butt"/><path d="M286.76 402.79L285.46 399.87" stroke="#000" stroke-width="1" stroke-linecap="butt"/><path d="M291.38 401.02L290.39 397.97" stroke="#000" stroke-width="1" stroke-linecap="butt"/><path d="M296.17 399.73L295.50 396.60" stroke="#000" stroke-width="1" stroke-linecap="butt"/><path d="M301.06 398.96L300.72 395.78" stroke="#000" stroke-width="1" stroke-linecap="butt"/><path d="M306.00 404.70L306.00 396.00" stroke="#000" stroke-width="3.400" stroke-linecap="round"/><path d="M326.65 410.23L331.00 402.70" stroke="#000" stroke-width="3.400" stroke-linecap="round"/><path d="M341.77 425.35L349.30 421.00" stroke="#000" stroke-width="3.400" stroke-linecap="round"/><path d="M347.30 446.00L356.00 446.00" stroke="#000" stroke-width="3.400" stroke-linecap="round"/><path d="M341.77 466.65L349.30 471.00" stroke="#000" stroke-width="3.400" stroke-linecap="round"/><path d="M326.65 481.77L331.00 489.30" stroke="#000" stroke-width="3.400" stroke-linecap="round"/><path d="M306.00 487.30L306.00 496.00" stroke="#000" stroke-width="3.400" stroke-linecap="round"/><path d="M285.35 481.77L281.00 489.30" stroke="#000" stroke-width="3.400" stroke-linecap="round"/><path d="M270.23 466.65L262.70 471.00" stroke="#000" stroke-width="3.400" stroke-linecap="round"/><path d="M264.70 446.00L256.00 446.00" stroke="#000" stroke-width="3.400" stroke-linecap="round"/><path d="M270.23 425.35L262.70 421.00" stroke="#000" stroke-width="3.400" stroke-linecap="round"/><path d="M285.35 410.23L281.00 402.70" stroke="#000" stroke-width="3.400" stroke-linecap="round"/><text x="286.300" y="440.500" font-family="Liberation Sans, sans-serif" font-size="17" fill="#1a1a1a">R</text><text x="297.300" y="433.200" font-family="Liberation Sans, sans-serif" font-size="11.500" fill="#1a1a1a">ocrail</text><path d="M277 434.500H333" stroke="#222" stroke-width="0.800"/><path d="M331 432.500L335 434.500L331 436.500z" fill="#222"/><path d="M306 446L329.700 422.400" stroke="#000" stroke-width="4" stroke-linecap="round"/><path d="M306 446L295.700 492.600" stroke="#000" stroke-width="4" stroke-linecap="round"/><path d="M306 446L334.700 462.700" stroke="#f00" stroke-width="1.600"/><path d="M338.500 465.100L349.600 471.600" stroke="#a80000" stroke-width="2.800" stroke-linecap="round"/><path d="M338.500 464.700L349.600 471.200" stroke="#f00" stroke-width="1.700"/><circle cx="334.700" cy="462.700" r="3.800" fill="#fff" stroke="#f00" stroke-width="1.700"/><circle cx="306" cy="446" r="2.800" fill="#f00"/></svg>
<!-- RIGHT-PANEL -->
<div class="a" style="left:380px;top:87px;width:522px;height:427px;background:#fff;border:1px solid #d9d9d9"></div>

<!-- BOTTOM -->
<div class="t" style="left:1px;top:520px;letter-spacing:-.55px">Server</div>
<div class="t" style="left:405px;top:520px;letter-spacing:-.15px">Centrale</div>
<div class="a" style="left:1px;top:535px;width:400px;height:34px;background:#fff;border:1px solid #abadb3"></div>
<div class="a" style="left:405px;top:535px;width:499px;height:34px;background:#fff;border:1px solid #abadb3"></div>
<div class="a" style="left:383px;top:537px;width:16px;height:30px;background:#f0f0f0"></div>
<div class="a" style="left:886px;top:537px;width:16px;height:30px;background:#f0f0f0"></div>
<svg class="a" style="left:383px;top:537px" width="17" height="30"><path d="M4.500 9.700L8 6.200L11.500 9.700M4.500 20.300L8 23.800L11.500 20.300" stroke="#bdbdbd" stroke-width="1.900" fill="none"/></svg>
<svg class="a" style="left:886px;top:537px" width="17" height="30"><path d="M4.500 9.700L8 6.200L11.500 9.700M4.500 20.300L8 23.800L11.500 20.300" stroke="#bdbdbd" stroke-width="1.900" fill="none"/></svg>
<!-- status bar -->
<div class="t" style="left:3px;top:575px">Welcome to Rocrail!</div>
<div class="t" style="left:186px;top:575px;letter-spacing:-.23px">Bewerk scherm</div>
<div class="t" style="left:550px;top:575px">0mA</div>
<div class="sbx" style="left:181px"></div><div class="sbx" style="left:363px"></div><div class="sbx" style="left:545px"></div><div class="sbx" style="left:715px"></div>
<div class="led" style="left:761px"></div><div class="led" style="left:778px"></div><div class="led" style="left:795px"></div><div class="led" style="left:812px"></div><div class="led" style="left:829px"></div><div class="led" style="left:846px"></div><div class="led" style="left:863px;border-color:#3be03b;background:#c8ffc8"></div><svg class="a" style="left:891px;top:579px" width="12" height="12"><g fill="#bfbfbf"><rect x="8" y="1" width="2" height="2"/><rect x="5" y="4" width="2" height="2"/><rect x="8" y="4" width="2" height="2"/><rect x="2" y="7" width="2" height="2"/><rect x="5" y="7" width="2" height="2"/><rect x="8" y="7" width="2" height="2"/></g></svg>
<div class="a bl"></div><div class="a br"></div><div class="a bb"></div>
</body></html>
